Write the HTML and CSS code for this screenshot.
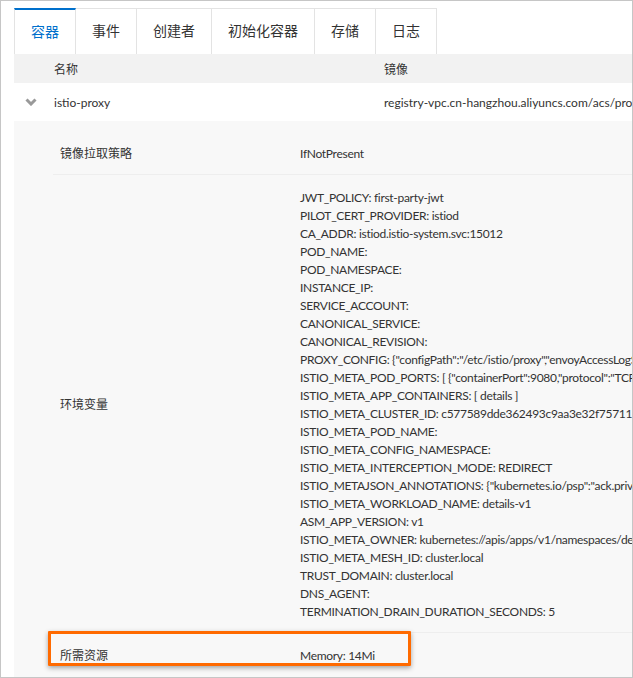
FILE: index.html
```html
<!DOCTYPE html>
<html lang="zh-CN">
<head>
<meta charset="utf-8">
<title>容器</title>
<link rel="stylesheet" href="styles.css">
</head>
<body>
<div class="frame">
  <div class="tabs">
    <div class="tab active">容器</div>
    <div class="tab">事件</div>
    <div class="tab">创建者</div>
    <div class="tab">初始化容器</div>
    <div class="tab">存储</div>
    <div class="tab">日志</div>
  </div>
  <div class="table">
    <div class="thead">
      <div class="c-name">名称</div>
      <div class="c-image">镜像</div>
    </div>
    <div class="trow">
      <div class="c-toggle">
        <svg width="12" height="8" viewBox="0 0 12 8"><path d="M1.5 1.5 L6 6 L10.5 1.5" fill="none" stroke="#999" stroke-width="3" stroke-linejoin="miter"/></svg>
      </div>
      <div class="c-name">istio-proxy</div>
      <div class="c-image">registry-vpc.cn-hangzhou.aliyuncs.com/acs/proxyv2:1.6.8-0-g7f3d2e1a-aliyun</div>
    </div>
    <div class="detail">
      <div class="drow">
        <div class="dlabel">镜像拉取策略</div>
        <div class="dvalue">IfNotPresent</div>
      </div>
      <div class="drow">
        <div class="dlabel">环境变量</div>
        <div class="dvalue">
          <div>JWT_POLICY: first-party-jwt</div>
          <div>PILOT_CERT_PROVIDER: istiod</div>
          <div>CA_ADDR: istiod.istio-system.svc:15012</div>
          <div>POD_NAME:</div>
          <div>POD_NAMESPACE:</div>
          <div>INSTANCE_IP:</div>
          <div>SERVICE_ACCOUNT:</div>
          <div>CANONICAL_SERVICE:</div>
          <div>CANONICAL_REVISION:</div>
          <div>PROXY_CONFIG: {"configPath":"/etc/istio/proxy","envoyAccessLogService":{},"envoyMetricsService":{}}</div>
          <div>ISTIO_META_POD_PORTS: [ {"containerPort":9080,"protocol":"TCP"} ]</div>
          <div>ISTIO_META_APP_CONTAINERS: [ details ]</div>
          <div>ISTIO_META_CLUSTER_ID: c577589dde362493c9aa3e32f75711c0a</div>
          <div>ISTIO_META_POD_NAME:</div>
          <div>ISTIO_META_CONFIG_NAMESPACE:</div>
          <div>ISTIO_META_INTERCEPTION_MODE: REDIRECT</div>
          <div>ISTIO_METAJSON_ANNOTATIONS: {"kubernetes.io/psp":"ack.privileged"}</div>
          <div>ISTIO_META_WORKLOAD_NAME: details-v1</div>
          <div>ASM_APP_VERSION: v1</div>
          <div>ISTIO_META_OWNER: kubernetes://apis/apps/v1/namespaces/default/deployments/details-v1</div>
          <div>ISTIO_META_MESH_ID: cluster.local</div>
          <div>TRUST_DOMAIN: cluster.local</div>
          <div>DNS_AGENT:</div>
          <div>TERMINATION_DRAIN_DURATION_SECONDS: 5</div>
        </div>
      </div>
      <div class="drow">
        <div class="dlabel">所需资源</div>
        <div class="dvalue">Memory: 14Mi</div>
      </div>
    </div>
  </div>
  <div class="highlight"></div>
</div>
</body>
</html>
```
FILE: styles.css
```css
* { box-sizing: border-box; }
html, body { margin: 0; padding: 0; background: #fff; }
.frame {
  position: relative;
  width: 633px;
  height: 678px;
  border: 1px solid #c6c6c6;
  overflow: hidden;
  padding: 7px 0 0 13px;
  font-family: "Lato", "Noto Sans CJK SC", sans-serif;
  color: #333;
  font-size: 12px;
}
.tabs { display: flex; height: 46px; }
.tab {
  font-size: 14px;
  padding: 0 16px;
  line-height: 44px;
  border: 1px solid #e3e3e3;
  border-left: none;
  border-bottom: none;
  white-space: nowrap;
  color: #333;
}
.tab:first-child { border-left: 1px solid #e3e3e3; }
.tab.active {
  color: #0070cc;
  border-top: 2px solid #0070cc;
  line-height: 43px;
}
.table { width: 1000px; }
.thead {
  display: flex;
  height: 29px;
  align-items: center;
  background: #f2f2f2;
  padding-left: 40px;
}
.thead .c-name, .trow .c-name { width: 330px; }
.trow {
  display: flex;
  height: 38px;
  align-items: center;
  background: #fff;
  white-space: nowrap;
}
.c-toggle { width: 40px; padding-left: 11px; display: flex; align-items: center; }
.c-toggle svg { display: block; }
.detail {
  background: #f8f8f8;
  padding: 10px 0 20px 39px;
}
.drow {
  display: flex;
  border-bottom: 1px solid #eeeeee;
  padding: 14px 0 11px;
  line-height: 18px;
}
.drow:last-child { border-bottom: none; }
.dlabel {
  width: 247px;
  padding-left: 7px;
  display: flex;
  align-items: center;
}
.dvalue { white-space: nowrap; letter-spacing: -0.3px; }
.highlight {
  position: absolute;
  left: 47px;
  top: 630px;
  width: 363px;
  height: 35px;
  border: 3px solid #ff6a00;
  box-shadow: 0 2px 5px rgba(0, 0, 0, 0.35);
  border-radius: 1px;
}
```
